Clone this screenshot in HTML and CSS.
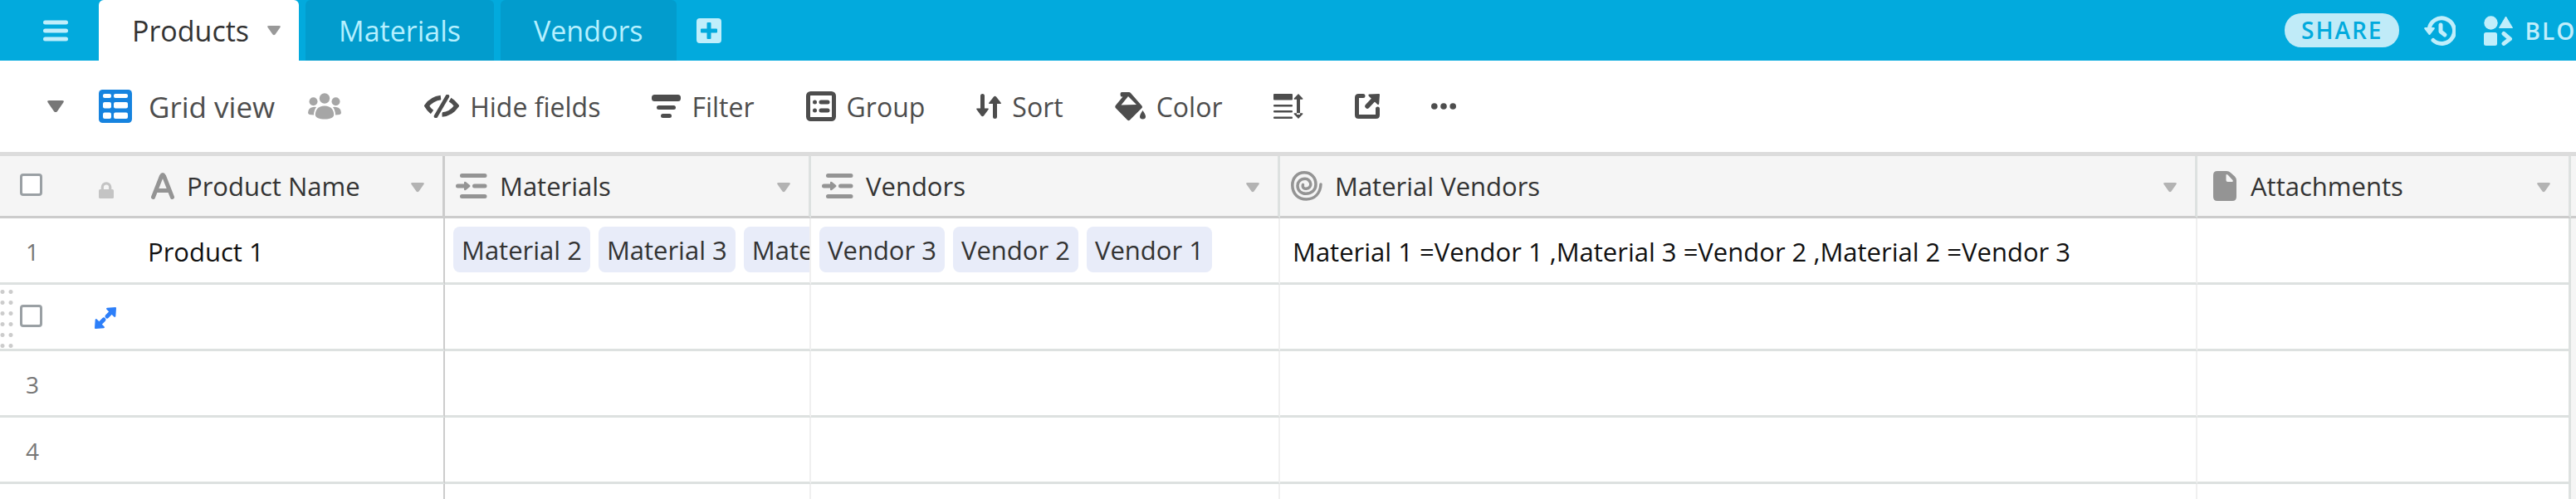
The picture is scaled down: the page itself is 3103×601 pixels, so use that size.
FILE: index.html
```
<!DOCTYPE html>
<html lang="en">
<head>
    <meta charset="UTF-8">
    <meta name="viewport" content="width=device-width, initial-scale=1.0">
    <title>Products - Grid view</title>
    <link rel="stylesheet" href="styles.css">
</head>
<body>
    <!-- Reusable icons -->
    <svg class="sprite" aria-hidden="true">
        <symbol id="caret" viewBox="0 0 16 12">
            <path d="M2 0h12q3 0 1.300 2.200L9.500 10.500q-1.500 1.500-3 0L.7 2.200Q-1 0 2 0z"/>
        </symbol>
        <symbol id="link-field" viewBox="0 0 38 30">
            <path d="M7.500 2.500h27.500M22.500 15h12.500M7.500 27.500h27.500M2.500 15h10" fill="none" stroke="currentColor" stroke-width="5" stroke-linecap="round"/>
            <path d="M10 11q0-2 2-1l5 4q1 1 0 2l-5 4q-2 1-2-1z"/>
        </symbol>
    </svg>

    <header class="topbar">
        <button class="menu-btn" aria-label="Menu">
            <svg class="icon" width="30" height="26" viewBox="0 0 30 26"><path d="M2.500 3h25M2.500 13h25M2.500 23h25" fill="none" stroke="currentColor" stroke-width="5" stroke-linecap="round"/></svg>
        </button>
        <nav class="tabs">
            <a href="#" class="tab active">Products
                <svg class="icon" width="16" height="12"><use href="#caret"/></svg>
            </a>
            <a href="#" class="tab">Materials</a>
            <a href="#" class="tab">Vendors</a>
            <button class="add-tab" aria-label="Add table">
                <svg class="icon" width="30" height="30" viewBox="0 0 30 30"><path fill-rule="evenodd" d="M4 0h22q4 0 4 4v22q0 4-4 4H4q-4 0-4-4V4q0-4 4-4zM13.500 5q-1 0-1 1v6.500H6q-1 0-1 1v3q0 1 1 1h6.500V24q0 1 1 1h3q1 0 1-1v-6.500H24q1 0 1-1v-3q0-1-1-1h-6.500V6q0-1-1-1z"/></svg>
            </button>
        </nav>
        <div class="topbar-right">
            <button class="share-btn">SHARE</button>
            <button class="history-btn" aria-label="History">
                <svg class="icon" width="38" height="36" viewBox="0 0 38 36">
                    <path d="M6 16.500A15.300 15.300 0 1 1 11 29.500" fill="none" stroke="currentColor" stroke-width="5" stroke-linecap="round"/>
                    <path d="M1.500 14h10q2 0 1 2l-5 6.500q-1 1-2 0L.5 16q-1-2 1-2z"/>
                    <path d="M20 11v8l5 4" fill="none" stroke="currentColor" stroke-width="5" stroke-linecap="round" stroke-linejoin="round"/>
                </svg>
            </button>
            <button class="blocks-btn">
                <svg class="icon" width="36" height="36" viewBox="0 0 36 36">
                    <circle cx="8.500" cy="8.500" r="8.200"/>
                    <path d="M26.500 1 34.500 14.500H18.500z" stroke="currentColor" stroke-linejoin="round"/>
                    <rect x="0" y="20" width="16" height="16" rx="2.500"/>
                    <path d="m24 21.500 7.500 6.300L24 33.500" fill="none" stroke="currentColor" stroke-width="5" stroke-linecap="round" stroke-linejoin="round"/>
                </svg>
                <span>BLOCKS</span>
            </button>
        </div>
    </header>

    <div class="toolbar">
        <button class="toggle-views" aria-label="Toggle views">
            <svg class="icon" width="20" height="15" viewBox="0 0 16 12"><use href="#caret"/></svg>
        </button>
        <button class="view-btn">
            <svg class="icon view-icon" width="40" height="40" viewBox="0 0 40 40">
                <rect width="40" height="40" rx="4.500" fill="#1683df"/>
                <g fill="#fff">
                    <rect x="5" y="5" width="10" height="5" rx="2"/><rect x="18" y="5" width="17" height="5" rx="2"/>
                    <rect x="5" y="15" width="10" height="7.500" rx="2"/><rect x="18" y="15" width="17" height="7.500" rx="2"/>
                    <rect x="5" y="27.500" width="10" height="7.500" rx="2"/><rect x="18" y="27.500" width="17" height="7.500" rx="2"/>
                </g>
            </svg>
            <span>Grid view</span>
            <svg class="icon people" width="40" height="32" viewBox="0 0 40 32">
                <circle cx="20" cy="6.500" r="6.200"/><circle cx="6.500" cy="10.300" r="5"/><circle cx="33.500" cy="10.300" r="5"/>
                <path d="M20 15.500c8 0 11.200 5 11.200 11 0 3-5 5-11.200 5s-11.200-2-11.200-5c0-6 3.200-11 11.200-11z"/>
                <path d="M6 17q2.500-.5 4 0-3 4-3 9.500-7 0-7-2.500 0-6 6-7zM34 17q-2.500-.5-4 0 3 4 3 9.500 7 0 7-2.500 0-6-6-7z"/>
            </svg>
        </button>
        <div class="tools">
            <button class="tool">
                <svg class="icon" width="42" height="28" viewBox="0 0 42 28">
                    <path d="M20 3.500Q9 5 3 13.500q2.500 4.500 6.500 7.500M31 6q5 3 8 7.500Q32 23.500 21.500 24" fill="none" stroke="currentColor" stroke-width="5.500"/>
                    <path d="M28 2 14 26" fill="none" stroke="#fff" stroke-width="9"/>
                    <path d="M28 2 14 26" fill="none" stroke="currentColor" stroke-width="4.500" stroke-linecap="round"/>
                </svg>
                <span>Hide fields</span>
            </button>
            <button class="tool">
                <svg class="icon" width="35" height="28" viewBox="0 0 35 28">
                    <rect width="35" height="8" rx="3.500"/><rect x="6" y="13" width="23" height="5" rx="2.500"/><rect x="11" y="23" width="13" height="5" rx="2.500"/>
                </svg>
                <span>Filter</span>
            </button>
            <button class="tool">
                <svg class="icon" width="36" height="36" viewBox="0 0 36 36">
                    <rect x="2.500" y="2.500" width="31" height="31" rx="3" fill="none" stroke="currentColor" stroke-width="5"/>
                    <circle cx="10.500" cy="13" r="2.500"/><circle cx="10.500" cy="23" r="2.500"/>
                    <rect x="15.500" y="10.500" width="13" height="5" rx="2.500"/><rect x="15.500" y="20.500" width="13" height="5" rx="2.500"/>
                </svg>
                <span>Group</span>
            </button>
            <button class="tool">
                <svg class="icon" width="30" height="30" viewBox="0 0 30 30">
                    <path d="M7.500 2.500V20M22.500 27.500V10" fill="none" stroke="currentColor" stroke-width="5" stroke-linecap="round"/>
                    <path d="M1 17.500h13q1.500 0 .5 1.500L9 26.500q-1.500 1.500-3 0L.5 19q-1-1.500.5-1.500zM16 12h13q1.500 0 .5-1.500L24 3.500q-1.500-1.500-3 0L15.500 10.500q-1 1.500.5 1.500z"/>
                </svg>
                <span>Sort</span>
            </button>
            <button class="tool">
                <svg class="icon" width="37" height="35" viewBox="0 0 37 35">
                    <path fill-rule="evenodd" d="M8 0h9q1 0 2 1l13.500 15.500q1 1.500 0 2.500L18 33.500q-1.500 1.500-3 0L.8 19q-1-1.500 0-3L9.500 5.500H8Q6.500 5 6.500 2.500 6.500.2 8 0zM16 5 7.500 15.500l18.500-.5z"/>
                    <path d="M33.500 22q3.500 5 3.500 7.500 0 3-3.500 3T30 29.500q0-2.500 3.500-7.500z"/>
                </svg>
                <span>Color</span>
            </button>
            <button class="tool" aria-label="Row height">
                <svg class="icon" width="36" height="30" viewBox="0 0 36 30">
                    <rect width="23" height="7.500" rx="1"/><rect y="13" width="23" height="2.500" rx="1"/><rect y="20" width="23" height="2.500" rx="1"/><rect y="27.500" width="23" height="2.500" rx="1"/>
                    <path d="M28 5h4v20h-4zM30 0l5.300 5.500q.5 1.200-.8 1.200h-9q-1.300 0-.8-1.200zM30 30l5.300-5.500q.5-1.200-.8-1.200h-9q-1.300 0-.8 1.200z"/>
                </svg>
            </button>
            <button class="tool" aria-label="Share view">
                <svg class="icon" width="30" height="30" viewBox="0 0 30 30">
                    <path d="M10 2.500H4.500q-2 0-2 2v21q0 2 2 2h21q2 0 2-2V18" fill="none" stroke="currentColor" stroke-width="5" stroke-linecap="round"/>
                    <path d="M15 15l7-7.500" fill="none" stroke="currentColor" stroke-width="5.500" stroke-linecap="round"/>
                    <path d="M17.500.5 29 0q1 0 1 1l-.8 11q-.7 2-2.200.5L17 3Q15.500 1 17.500.5z"/>
                </svg>
            </button>
            <button class="tool" aria-label="More options">
                <svg class="icon" width="30" height="8" viewBox="0 0 30 8"><circle cx="3.800" cy="4" r="3.800"/><circle cx="15" cy="4" r="3.800"/><circle cx="26.200" cy="4" r="3.800"/></svg>
            </button>
        </div>
    </div>

    <table class="grid">
        <colgroup>
            <col class="col-row">
            <col class="col-name">
            <col class="col-materials">
            <col class="col-vendors">
            <col class="col-material-vendors">
            <col class="col-attachments">
            <col>
        </colgroup>
        <thead>
            <tr>
                <th>
                    <div class="row-tools">
                        <input type="checkbox" aria-label="Select all rows">
                        <svg class="icon lock" width="18" height="20" viewBox="0 0 18 20"><path d="M4.300 10V6.500a4.700 4.700 0 0 1 9.400 0V10" fill="none" stroke="currentColor" stroke-width="3.200"/><rect y="9" width="18" height="11" rx="1.500"/></svg>
                    </div>
                </th>
                <th class="pinned">
                    <div class="field field-name">
                        <svg class="icon" width="28" height="32" viewBox="0 0 28 32"><path d="M2.500 29.500 12.500 4q1.500-3 3 0l10 25.500M6.500 21.500h15" fill="none" stroke="currentColor" stroke-width="5" stroke-linecap="round" stroke-linejoin="round"/></svg>
                        <span>Product Name</span>
                        <svg class="icon caret" width="16" height="12"><use href="#caret"/></svg>
                    </div>
                </th>
                <th>
                    <div class="field">
                        <svg class="icon" width="38" height="30"><use href="#link-field"/></svg>
                        <span>Materials</span>
                        <svg class="icon caret" width="16" height="12"><use href="#caret"/></svg>
                    </div>
                </th>
                <th>
                    <div class="field">
                        <svg class="icon" width="38" height="30"><use href="#link-field"/></svg>
                        <span>Vendors</span>
                        <svg class="icon caret" width="16" height="12"><use href="#caret"/></svg>
                    </div>
                </th>
                <th>
                    <div class="field">
                        <svg class="icon" width="38" height="36" viewBox="0 0 38 36"><path d="M14.500 16.500C13.500 20 16 21.500 18.500 21.300C22 21 24 18.500 23.800 15.500C23.500 12 20.500 9.300 17 9.300C11.500 9.300 8 13 8 17.800C8 23.500 12.500 27.300 18 27.300C25.500 27.300 30 22.500 30 16C30 7.500 24 1.800 16 1.800C7.500 1.800 1.800 8.500 1.800 17C1.800 27.500 9 34 18.500 34C28.500 34 35.500 27 36 16" fill="none" stroke="currentColor" stroke-width="3.500" stroke-linecap="round"/></svg>
                        <span>Material Vendors</span>
                        <svg class="icon caret" width="16" height="12"><use href="#caret"/></svg>
                    </div>
                </th>
                <th>
                    <div class="field field-file">
                        <svg class="icon" width="28" height="36" viewBox="0 0 28 36"><path fill-rule="evenodd" d="M5 0h11q3 0 5 2l5 4.500q2 2 2 5V31q0 5-5 5H5q-5 0-5-5V5q0-5 5-5zM15.500 4.500V11q0 2 2 2H23q1.500-.5.5-2l-6-6.500q-2-1-2 0z"/></svg>
                        <span>Attachments</span>
                        <svg class="icon caret" width="16" height="12"><use href="#caret"/></svg>
                    </div>
                </th>
                <th></th>
            </tr>
        </thead>
        <tbody>
            <tr>
                <td class="row-number">1</td>
                <td class="pinned">Product 1</td>
                <td>
                    <div class="chips"><span class="chip">Material 2</span><span class="chip">Material 3</span><span class="chip">Material 1</span></div>
                </td>
                <td>
                    <div class="chips"><span class="chip">Vendor 3</span><span class="chip">Vendor 2</span><span class="chip">Vendor 1</span></div>
                </td>
                <td class="text">Material 1 =Vendor 1 ,Material 3 =Vendor 2 ,Material 2 =Vendor 3</td>
                <td class="last"></td>
                <td class="outside"></td>
            </tr>
            <tr>
                <td class="hovered">
                    <div class="row-tools">
                        <input type="checkbox" aria-label="Select row 2">
                        <svg class="icon expand" width="26" height="26" viewBox="0 0 26 26"><path d="M15 11l6-6M11 15l-6 6" fill="none" stroke="currentColor" stroke-width="5" stroke-linecap="round"/><path d="M15 .7 25 0q1 0 1 1l-.7 10q-.8 1.500-2 .5l-9-9q-1-1.300.7-1.800zM11 25.300 1 26q-1 0-1-1l.7-10q.8-1.500 2-.5l9 9q1 1.300-.7 1.800z"/></svg>
                    </div>
                </td>
                <td class="pinned"></td>
                <td></td>
                <td></td>
                <td></td>
                <td class="last"></td>
                <td class="outside"></td>
            </tr>
            <tr>
                <td class="row-number">3</td>
                <td class="pinned"></td>
                <td></td>
                <td></td>
                <td></td>
                <td class="last"></td>
                <td class="outside"></td>
            </tr>
            <tr>
                <td class="row-number">4</td>
                <td class="pinned"></td>
                <td></td>
                <td></td>
                <td></td>
                <td class="last"></td>
                <td class="outside"></td>
            </tr>
            <tr>
                <td class="row-number"></td>
                <td class="pinned"></td>
                <td></td>
                <td></td>
                <td></td>
                <td class="last"></td>
                <td class="outside"></td>
            </tr>
        </tbody>
    </table>
</body>
</html>
```
FILE: styles.css
```
* {
    margin: 0;
    padding: 0;
    box-sizing: border-box;
}

body {
    font-family: 'Open Sans', 'Noto Sans', sans-serif;
    font-size: 32px;
    color: #333;
    background: #fff;
    height: 100vh;
    overflow: hidden;
}

button {
    font: inherit;
    letter-spacing: inherit;
    color: inherit;
    background: none;
    border: none;
    cursor: pointer;
}

.icon {
    display: block;
    flex: none;
    fill: currentColor;
}

.sprite {
    display: none;
}

/* Top bar */
.topbar {
    display: flex;
    align-items: center;
    height: 73px;
    background: #02aadd;
    color: #c0eefb;
}

.menu-btn {
    padding: 0 37px 0 52px;
}

.tabs {
    display: flex;
    align-items: center;
    flex: 1;
    gap: 8px;
    height: 100%;
}

.tab {
    display: flex;
    align-items: center;
    gap: 22px;
    height: 100%;
    padding: 0 40px;
    border-radius: 6px 6px 0 0;
    background: #029ccd;
    color: #b5f0ff;
    text-decoration: none;
    font-size: 34px;
}

.tab.active {
    padding-right: 22px;
    background: #fff;
    color: #333;
    font-weight: 500;
}

.tab .icon {
    color: #999;
}

.add-tab {
    margin-left: 16px;
}

.topbar-right {
    display: flex;
    align-items: center;
    width: 351px;
    overflow: hidden;
    white-space: nowrap;
    font-size: 28px;
    font-weight: 600;
    letter-spacing: 2px;
}

.share-btn {
    flex: none;
    height: 41px;
    padding: 0 20px;
    margin-right: 30px;
    border-radius: 20px;
    background: #c0ebf8;
    color: #02aadd;
    line-height: 41px;
}

.history-btn {
    margin-right: 34px;
}

.blocks-btn {
    display: flex;
    align-items: center;
    gap: 13px;
}

/* View toolbar */
.toolbar {
    display: flex;
    align-items: center;
    height: 110px;
    padding-left: 57px;
    color: #4d4d4d;
    font-weight: 500;
}

.toggle-views {
    margin-right: 42px;
    color: #777;
}

.view-btn {
    display: flex;
    align-items: center;
    gap: 20px;
    margin-right: 100px;
    font-size: 35px;
}

.people {
    margin-left: 20px;
    color: #a6a6a6;
}

.tools {
    display: flex;
    align-items: center;
    gap: 62px;
}

.tool {
    display: flex;
    align-items: center;
    gap: 13px;
}

/* Grid */
.grid {
    width: 100%;
    table-layout: fixed;
    border-collapse: separate;
    border-spacing: 0;
    border-top: 5px solid #dcdcdc;
    font-size: 31px;
}

.col-row {
    width: 170px;
}

.col-name {
    width: 366px;
}

.col-materials {
    width: 441px;
}

.col-vendors {
    width: 565px;
}

.col-material-vendors {
    width: 1105px;
}

.col-attachments {
    width: 450px;
}

.grid th {
    height: 75px;
    background: #f5f5f5;
    border-bottom: 3px solid #ccc;
    border-right: 3px solid #dde1e0;
    font-weight: 400;
    text-align: left;
}

.grid td {
    height: 80px;
    border-bottom: 3px solid #dde1e0;
    border-right: 2px solid #f0f0f0;
    color: #111;
    white-space: nowrap;
    overflow: hidden;
}

.grid th:first-child,
.grid td:first-child,
.grid th:last-child,
.grid td:last-child {
    border-right: none;
}

.grid th.pinned {
    border-right: 3px solid #ccc;
}

.grid td.pinned {
    padding: 2px 0 0 8px;
    border-right: 2px solid #ccc;
}

.grid td.last {
    border-right: 3px solid #dde1e0;
}

.grid td.outside {
    background: #f5f5f5;
    border-bottom: none;
}

.grid td.row-number {
    padding: 2px 0 0 31px;
    color: #777;
    font-size: 28px;
}

.grid td.text {
    padding: 2px 0 0 15px;
}

.row-tools {
    display: flex;
    align-items: center;
    padding: 0 0 3px 24px;
}

.row-tools input {
    appearance: none;
    width: 27px;
    height: 27px;
    border: 3px solid #9aa0a4;
    border-radius: 4px;
    background: #fff;
}

.lock {
    margin: 12px 0 0 68px;
    color: #c4c4c4;
}

.expand {
    margin: 6px 0 0 63px;
    color: #2d7ff9;
}

/* Drag handle dots on the hovered row */
.hovered {
    background: radial-gradient(circle, #ccc 2px, transparent 3px) -2px 2px / 10px 13px repeat-y,
        radial-gradient(circle, #ccc 2px, transparent 3px) 8px 2px / 10px 13px repeat-y;
}

.field {
    display: flex;
    align-items: center;
    gap: 15px;
    padding: 0 22px 0 13px;
    color: #949494;
}

.field span {
    flex: 1;
    color: #333;
}

.field-name {
    padding-left: 12px;
}

.field-file {
    gap: 17px;
    padding-left: 19px;
}

.caret {
    margin-top: 4px;
    color: #b3b3b3;
}

.chips {
    display: flex;
    gap: 10px;
    padding: 0 0 2px 10px;
    overflow: hidden;
}

.chip {
    flex: none;
    height: 55px;
    padding: 0 10px;
    line-height: 57px;
    border-radius: 8px;
    background: #e8ecf9;
    color: #333;
}
```
